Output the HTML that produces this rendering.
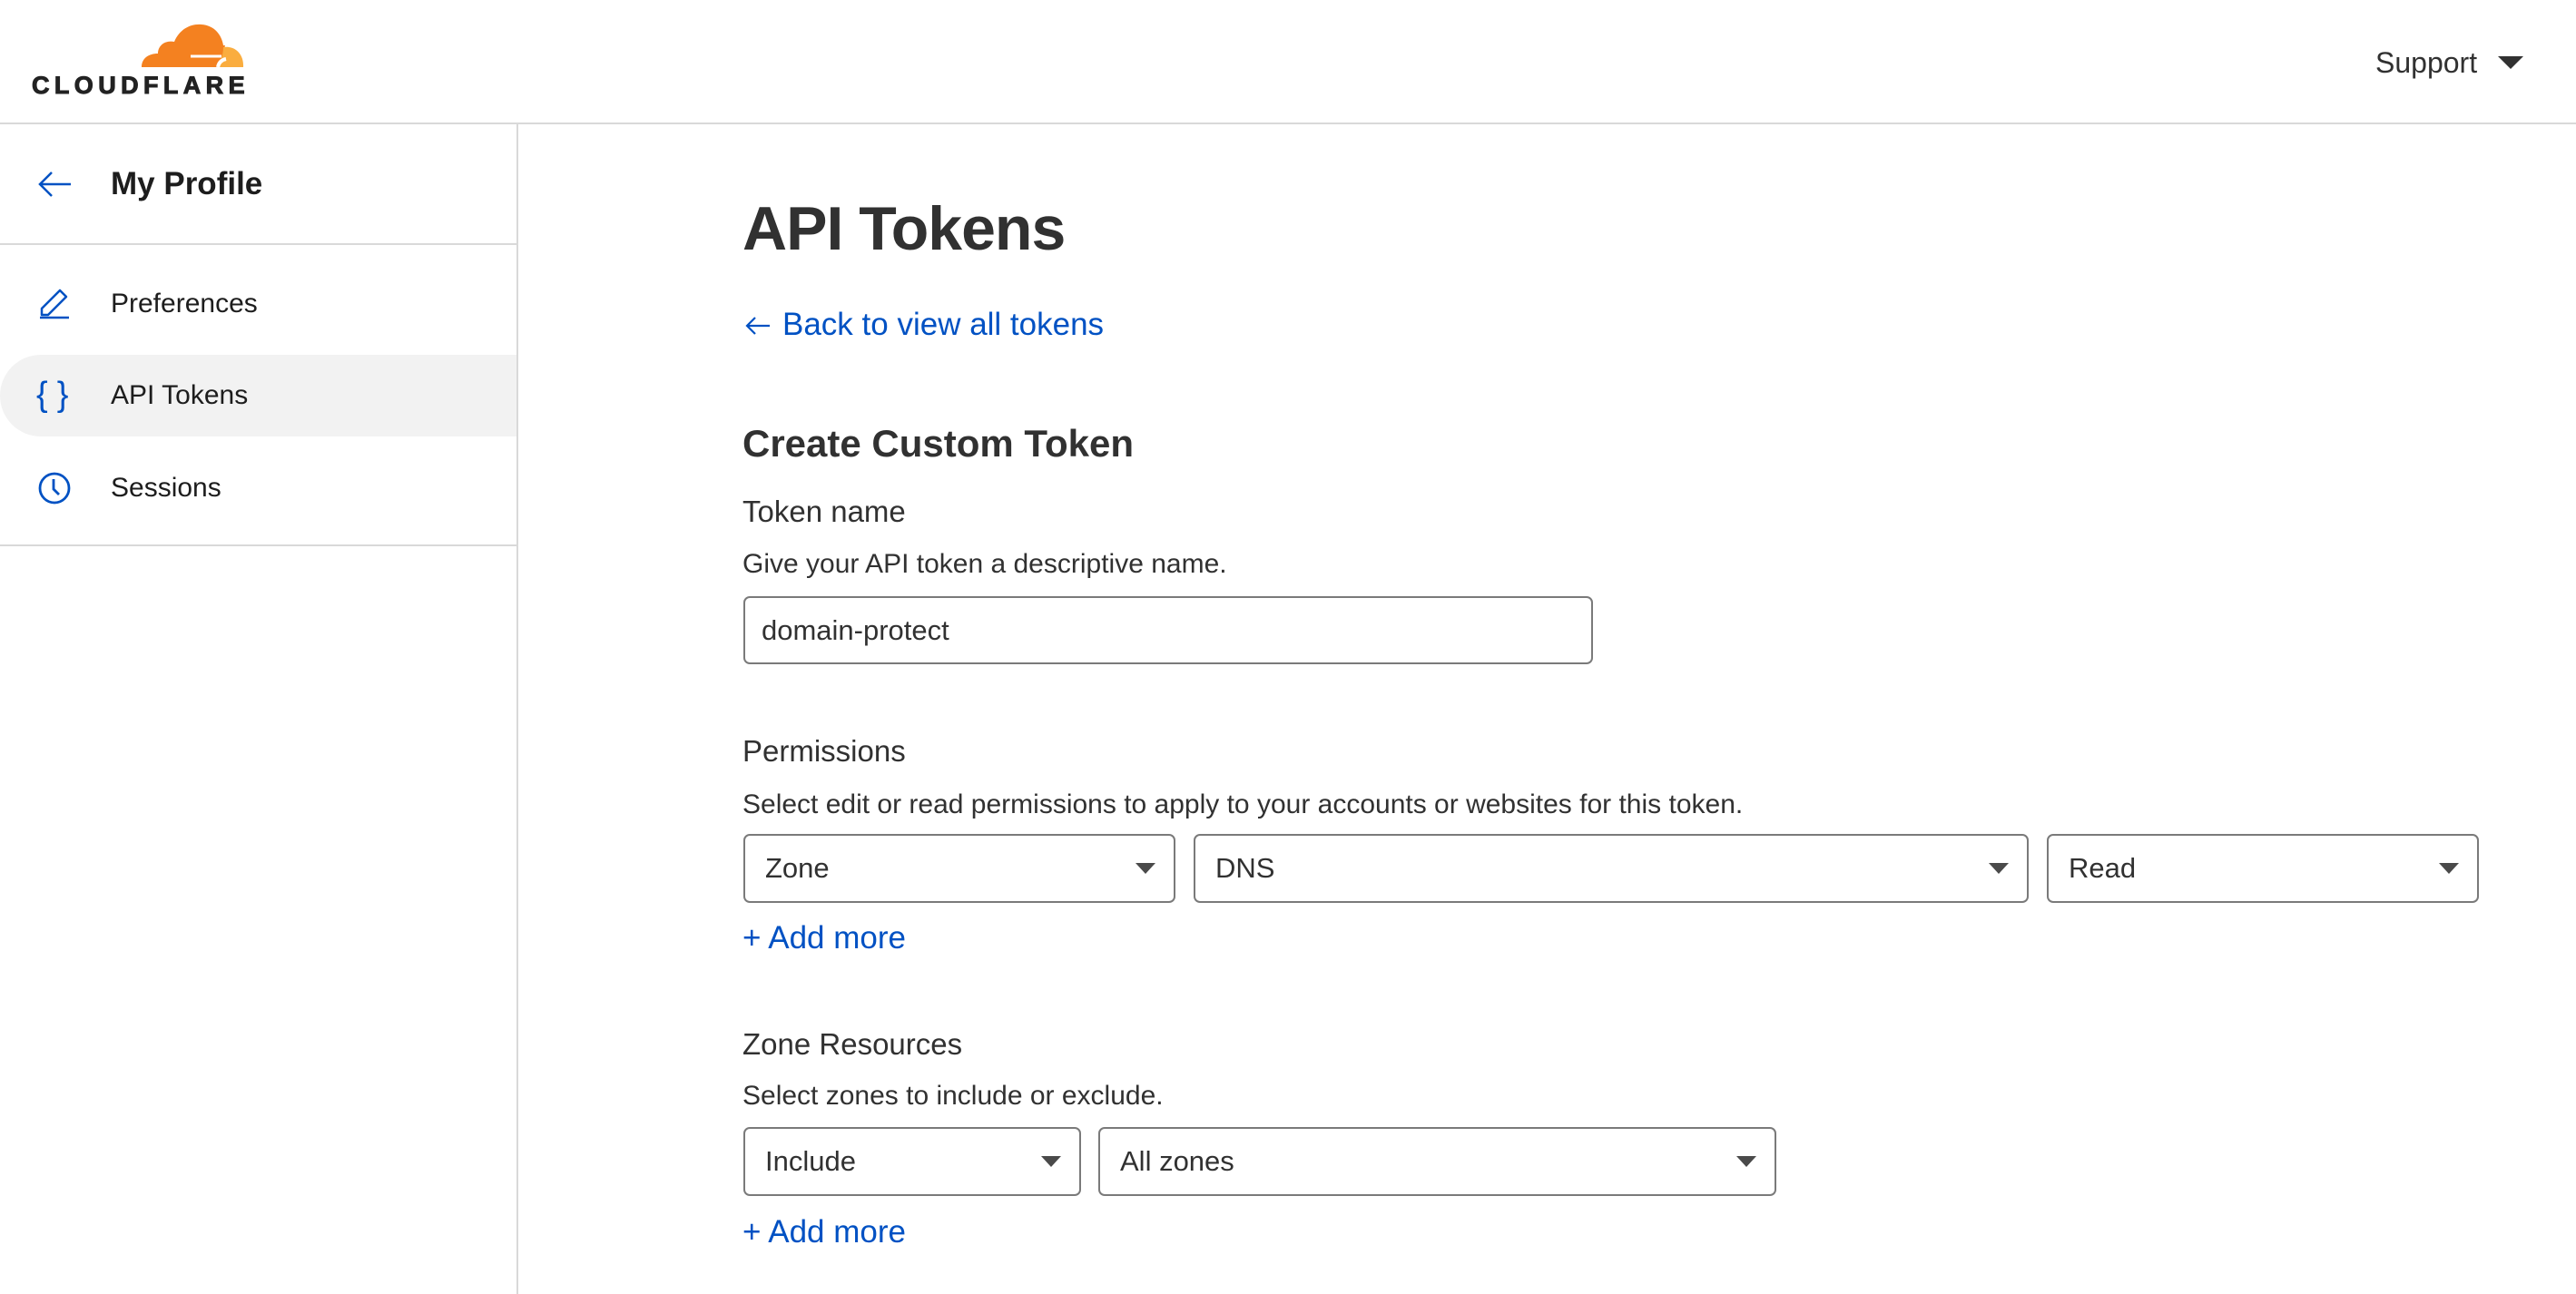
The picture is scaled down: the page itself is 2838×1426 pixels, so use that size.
<!DOCTYPE html>
<html><head><meta charset="utf-8"><style>
*{margin:0;padding:0;box-sizing:border-box}
body{width:2838px;height:1426px;background:#fff;font-family:"Liberation Sans",sans-serif;color:#313131;position:relative;overflow:hidden}
.a{position:absolute;white-space:nowrap}
.sel{position:absolute;border:2px solid #7a7a7a;border-radius:7px;background:#fff;font-size:31px;color:#313131}
.sel span{position:absolute;left:22px;top:50%;transform:translateY(-50%)}
.sel i{position:absolute;right:20px;top:30px;width:0;height:0;border-left:11px solid transparent;border-right:11px solid transparent;border-top:12px solid #4a4a4a}
.link{color:#0051c3;font-size:35px}
</style></head><body>
<!-- header -->
<svg class="a" style="left:154px;top:24px" width="116" height="54" viewBox="0 0 116 54">
<path d="M2 50 C2 40 10 35 20 35 C20 26 28 20 38 22 C44 8 56 2 68 3 C82 4 90 14 92 26 L94 26 C92 34 90 42 88 50 Z" fill="#f48120"/>
<path d="M92 28 C104 26 115 35 114 50 L86 50 C88 44 92 38 92 28 Z" fill="#faad3f"/>
<path d="M56 38 L90 38" stroke="#fff" stroke-width="3"/>
<path d="M86 50 C87 45 90 42 95 41" stroke="#fff" stroke-width="4" fill="none"/>
</svg>
<div class="a" style="left:35px;top:79px;font-size:27px;font-weight:900;letter-spacing:5.4px;color:#222;-webkit-text-stroke:1px #222">CLOUDFLARE</div>
<div class="a" style="left:2617px;top:51px;font-size:32px;color:#313131">Support</div>
<div class="a" style="left:2752px;top:62px;border-left:14px solid transparent;border-right:14px solid transparent;border-top:14px solid #313131"></div>
<div class="a" style="left:0;top:135px;width:2838px;height:2px;background:#d9d9d9"></div>
<!-- sidebar -->
<div class="a" style="left:569px;top:135px;width:2px;height:1291px;background:#d9d9d9"></div>
<svg class="a" style="left:40px;top:187px" width="40" height="32" viewBox="0 0 40 32"><path d="M38 16H4M17 3L4 16l13 13" stroke="#0051c3" stroke-width="2.5" fill="none"/></svg>
<div class="a" style="left:122px;top:183px;font-size:35px;font-weight:700;color:#1d1d1d">My Profile</div>
<div class="a" style="left:0;top:268px;width:569px;height:2px;background:#d9d9d9"></div>
<svg class="a" style="left:42px;top:315px" width="36" height="38" viewBox="0 0 36 38"><path d="M2 35H34M4 32V25L24 5l7 7L11 32Z" stroke="#0051c3" stroke-width="2.5" fill="none" stroke-linejoin="round"/></svg>
<div class="a" style="left:122px;top:318px;font-size:30px;color:#1d1d1d">Preferences</div>
<div class="a" style="left:0;top:391px;width:569px;height:90px;background:#f2f2f2;border-radius:45px 0 0 45px"></div>
<div class="a" style="left:40px;top:414px;font-size:38px;color:#0051c3;letter-spacing:10px">{}</div>
<div class="a" style="left:122px;top:419px;font-size:30px;color:#1d1d1d">API Tokens</div>
<svg class="a" style="left:41px;top:519px" width="38" height="38" viewBox="0 0 38 38"><circle cx="19" cy="19" r="16" stroke="#0051c3" stroke-width="2.8" fill="none"/><path d="M18 9v11l6 6" stroke="#0051c3" stroke-width="2.8" fill="none"/></svg>
<div class="a" style="left:122px;top:521px;font-size:30px;color:#1d1d1d">Sessions</div>
<div class="a" style="left:0;top:600px;width:569px;height:2px;background:#d9d9d9"></div>
<!-- main -->
<div class="a" style="left:818px;top:213px;font-size:68px;font-weight:700;color:#313131;letter-spacing:-1px">API Tokens</div>
<svg class="a" style="left:820px;top:347px" width="30" height="24" viewBox="0 0 30 24"><path d="M28 12H3M12 3L3 12l9 9" stroke="#0051c3" stroke-width="2.2" fill="none"/></svg>
<div class="a link" style="left:862px;top:338px">Back to view all tokens</div>
<div class="a" style="left:818px;top:465px;font-size:42px;font-weight:700;color:#313131">Create Custom Token</div>
<div class="a" style="left:818px;top:545px;font-size:33px">Token name</div>
<div class="a" style="left:818px;top:605px;font-size:30px">Give your API token a descriptive name.</div>
<div class="sel" style="left:819px;top:657px;width:936px;height:75px"><span style="left:18px">domain-protect</span></div>
<div class="a" style="left:818px;top:809px;font-size:33px">Permissions</div>
<div class="a" style="left:818px;top:870px;font-size:30px">Select edit or read permissions to apply to your accounts or websites for this token.</div>
<div class="sel" style="left:819px;top:919px;width:476px;height:76px"><span>Zone</span><i></i></div>
<div class="sel" style="left:1315px;top:919px;width:920px;height:76px"><span>DNS</span><i></i></div>
<div class="sel" style="left:2255px;top:919px;width:476px;height:76px"><span>Read</span><i></i></div>
<div class="a link" style="left:818px;top:1014px"><span style="font-weight:300">+</span> Add more</div>
<div class="a" style="left:818px;top:1132px;font-size:33px">Zone Resources</div>
<div class="a" style="left:818px;top:1191px;font-size:30px">Select zones to include or exclude.</div>
<div class="sel" style="left:819px;top:1242px;width:372px;height:76px"><span>Include</span><i></i></div>
<div class="sel" style="left:1210px;top:1242px;width:747px;height:76px"><span>All zones</span><i></i></div>
<div class="a link" style="left:818px;top:1338px"><span style="font-weight:300">+</span> Add more</div>
</body></html>
